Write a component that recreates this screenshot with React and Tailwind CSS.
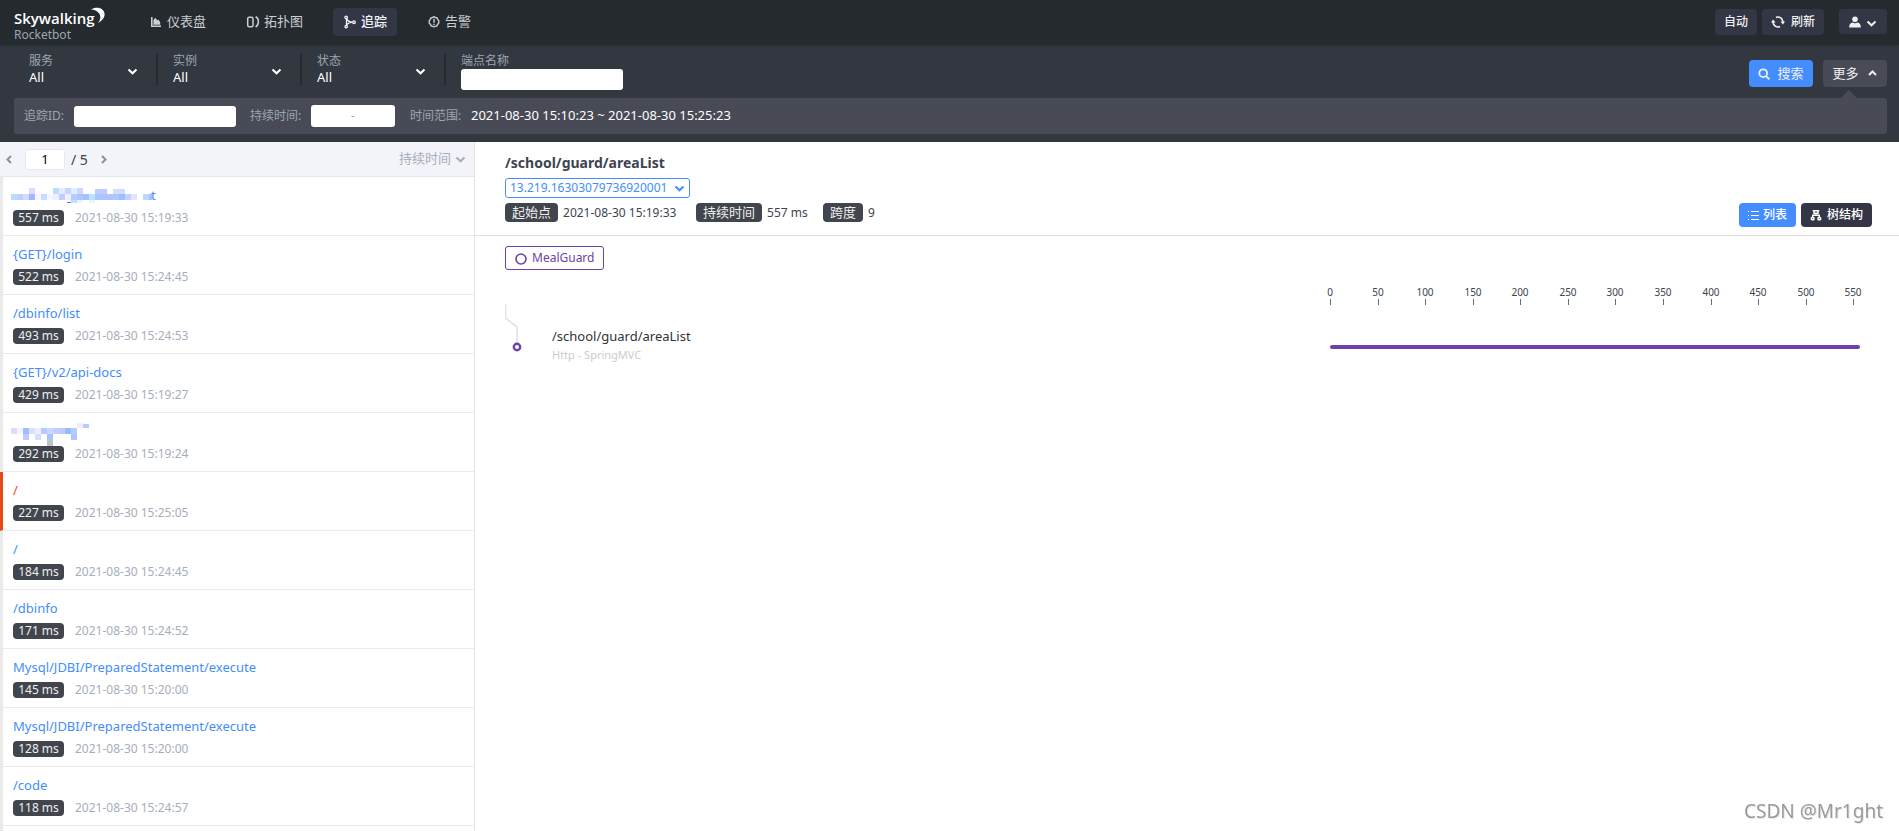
import React from "react";

const traces = [
  { mosaic: "first", ms: 557, time: "2021-08-30 15:19:33" },
  { name: "{GET}/login", ms: 522, time: "2021-08-30 15:24:45" },
  { name: "/dbinfo/list", ms: 493, time: "2021-08-30 15:24:53" },
  { name: "{GET}/v2/api-docs", ms: 429, time: "2021-08-30 15:19:27" },
  { mosaic: "second", ms: 292, time: "2021-08-30 15:19:24" },
  { name: "/", ms: 227, time: "2021-08-30 15:25:05", error: true },
  { name: "/", ms: 184, time: "2021-08-30 15:24:45" },
  { name: "/dbinfo", ms: 171, time: "2021-08-30 15:24:52" },
  { name: "Mysql/JDBI/PreparedStatement/execute", ms: 145, time: "2021-08-30 15:20:00" },
  { name: "Mysql/JDBI/PreparedStatement/execute", ms: 128, time: "2021-08-30 15:20:00" },
  { name: "/code", ms: 118, time: "2021-08-30 15:24:57" },
];

const FONT = "font-['Noto_Sans','Noto_Sans_CJK_SC',sans-serif]";

// Censored names: [x, y, width, height, colour] blocks.
const firstBlocks = [
  [0, 8, 6, 6, "#bcdcff"], [6, 8, 6, 6, "#c3ccff"], [12, 8, 6, 6, "#d3dcff"], [18, 2, 6, 6, "#dedcfb"], [18, 8, 6, 6, "#a3b6ff"],
  [24, 8, 6, 6, "#fdf3ff"], [30, 8, 6, 6, "#c5deff"], [36, 8, 6, 6, "#f6f8ff"], [42, 2, 6, 6, "#b9dfff"], [42, 8, 6, 6, "#edf0ff"],
  [48, 2, 6, 6, "#e3ebff"], [48, 8, 6, 6, "#c3ccff"], [54, 2, 6, 6, "#c3d6ff"], [54, 8, 6, 6, "#f6eafd"], [60, 2, 6, 6, "#e2edff"],
  [60, 8, 6, 6, "#b4ccff"], [60, 14, 6, 3, "#bfe0ff"], [66, 2, 6, 6, "#cdd8ff"], [66, 8, 6, 6, "#b3c3ff"], [66, 14, 6, 3, "#edf3ff"],
  [72, 8, 6, 6, "#a1c3ff"], [78, 8, 6, 6, "#bde4ff"], [78, 14, 6, 3, "#e9f4ff"], [84, 3, 12, 5, "#c0ccff"], [84, 8, 6, 6, "#a9c7ff"],
  [90, 8, 12, 6, "#b4c3ff"], [102, 3, 12, 5, "#d3dcff"], [102, 8, 6, 6, "#a9c9ff"], [108, 8, 6, 6, "#9fbfff"],
  [114, 8, 6, 6, "#c3d3ff"], [120, 8, 6, 6, "#e3e3ff"], [132, 8, 6, 6, "#bcd8ff"],
  [138, 8, 3, 6, "#a9bfff"], [56, 16, 4, 1, "#448dfe"],
];
const secondBlocks = [
  [0, 6, 6, 6, "#dedcfb"], [6, 6, 6, 6, "#f9f3ff"], [12, 6, 6, 6, "#9fc0ff"], [12, 12, 6, 6, "#c0ccff"], [18, 6, 6, 6, "#d3e3ff"],
  [24, 6, 6, 6, "#f3eafd"], [24, 12, 6, 6, "#d3dfff"], [30, 0, 6, 6, "#f3ffff"], [30, 6, 6, 6, "#b3ccff"], [36, 6, 6, 6, "#cfd6ff"],
  [36, 12, 6, 6, "#a4c4ff"], [36, 18, 6, 6, "#c2c3c7"], [42, 6, 6, 6, "#c6ceff"], [48, 6, 6, 6, "#b9ccff"], [54, 6, 6, 6, "#94bcff"],
  [60, 6, 6, 6, "#b4ccff"], [60, 12, 6, 6, "#b3c3ff"], [66, 1, 6, 5, "#f6eafd"], [72, 2, 6, 4, "#b4ccff"],
];

function Mosaic({ kind }) {
  const blocks = kind === "first" ? firstBlocks : secondBlocks;
  return (
    <svg width="150" height="24" viewBox="0 0 150 24" className="-ml-0.5 shrink-0" aria-hidden="true" shapeRendering="crispEdges">
      {blocks.map(([x, y, w, h, c], i) => (
        <rect key={i} x={x} y={y} width={w} height={h} fill={c} />
      ))}
    </svg>
  );
}

function Chevron({ dir = "down", className = "" }) {
  const d = {
    down: "M1.500 3.500 L5.500 7.300 L9.500 3.500",
    up: "M2 7 L5.500 3.500 L9 7",
    left: "M7 2 L3.500 5.500 L7 9",
    right: "M4 2 L7.500 5.500 L4 9",
  }[dir];
  return (
    <svg width="11" height="11" viewBox="0 0 11 11" className={"pointer-events-none shrink-0 " + className} fill="none" stroke="currentColor" strokeWidth="2" aria-hidden="true">
      <path d={d} />
    </svg>
  );
}

const iconBox = "size-3.5 shrink-0";
function ChartIcon() {
  return (
    <svg viewBox="0 0 14 14" className={iconBox} fill="currentColor" aria-hidden="true">
      <path d="M2 2h1.600v8.600H12V12H2z" />
      <path d="M4.400 9.800V5l2-2.200 1.800 2.400 1.400-.4 1.600 2.400v2.600z" />
    </svg>
  );
}
function TopologyIcon() {
  return (
    <svg viewBox="0 0 14 14" className={iconBox} fill="none" stroke="currentColor" strokeWidth="1.500" aria-hidden="true">
      <rect x="1.700" y="2.200" width="5.300" height="9.600" rx="1.500" />
      <path d="M9.600 1.700c2 .8 2.800 2.300 2.800 4.800s-.9 4.500-2.800 5.500" />
    </svg>
  );
}
function TraceIcon() {
  return (
    <svg viewBox="0 0 14 14" className={iconBox} fill="none" stroke="currentColor" strokeWidth="1.300" aria-hidden="true">
      <path d="M3.500 3.200v7.500M3.500 10c1-1.500 3-2.700 6-2.900M3.500 3.500c1 2.300 3 3.500 6 3.600" />
      <circle cx="3.200" cy="2.400" r="1.200" />
      <circle cx="3.200" cy="11.600" r="1.200" />
      <circle cx="11" cy="7.200" r="1.300" />
    </svg>
  );
}
function AlarmIcon() {
  return (
    <svg viewBox="0 0 14 14" className={iconBox} fill="none" stroke="currentColor" strokeWidth="1.400" aria-hidden="true">
      <path d="M7 1.600l1.300.9 1.700.3.700 1.600 1.100 1.300-.1 2.500-1.200 1.300-.8 1.500-1.700.3-1 .7-1-.7-1.700-.3-.8-1.500-1.200-1.300-.1-2.500 1.100-1.300.7-1.600 1.700-.3z" />
      <path d="M7 4v3.800M7 8.700v1.300" />
    </svg>
  );
}

const nav = [
  { label: "仪表盘", Icon: ChartIcon },
  { label: "拓扑图", Icon: TopologyIcon },
  { label: "追踪", Icon: TraceIcon, active: true },
  { label: "告警", Icon: AlarmIcon },
];

function Header() {
  return (
    <header className="relative z-10 flex h-[45px] shrink-0 items-center bg-[#252a2f] pr-3 pb-0.5 pl-3.5 shadow-[0_1px_2px_rgba(0,0,0,0.2)]">
      <a href="#home" className="relative flex w-[125px] shrink-0 flex-col self-start pt-2 text-white">
        <span className="font-['Open_Sans',sans-serif] text-[15px] leading-5 font-semibold">Skywalking</span>
        <span className="text-[12px] leading-[14px] text-[#9da5b2]">Rocketbot</span>
        <svg viewBox="0 0 16 18" className="absolute top-[7px] left-[77px] h-[18px] w-4" fill="currentColor" aria-hidden="true">
          <path d="M0 2.500C3.500.3 8.500 0 11.500 2.800c4 3.700 2.300 10-4.500 13.200C9.800 12.500 10 9 8 6.200 6.200 3.800 3 2.400 0 2.500z" />
        </svg>
      </a>
      <nav className="flex gap-5">
        {nav.map(({ label, Icon, active }) => (
          <a
            key={label}
            href={"#" + label}
            className={
              "flex h-7 items-center gap-1 rounded px-2.5 text-[13px] " +
              (active ? "bg-[#333645] font-medium text-[#f2f4f8]" : "text-[#cbcdd0]")
            }
          >
            <Icon />
            {label}
          </a>
        ))}
      </nav>
      <div className="ml-auto flex items-center text-[12px] text-[#efefef]">
        <button type="button" className="h-[26px] rounded bg-[#333645] px-[9px] font-medium">自动</button>
        <button type="button" className="ml-[5px] flex h-[26px] items-center gap-1.5 rounded bg-[#333645] px-[9px] font-medium">
          <svg viewBox="0 0 14 14" className="size-3.5" fill="none" stroke="currentColor" strokeWidth="1.700" aria-hidden="true">
            <path d="M5 2.400A5 5 0 0 1 11.900 7.200M9 11.600A5 5 0 0 1 2.100 6.800" />
            <path d="M12 9.400 9.400 6.600h4.600zM2 4.600 4.600 7.400H0z" fill="currentColor" stroke="none" />
          </svg>
          刷新
        </button>
        <button type="button" aria-label="User" className="ml-[15px] flex h-[25px] items-center gap-[5px] rounded bg-[#333645] px-2.5">
          <svg viewBox="0 0 12 12" className="size-3" fill="currentColor" aria-hidden="true">
            <circle cx="6" cy="3.200" r="2.800" />
            <path d="M.2 11.500C0 8.500 1.500 6.800 3.500 6.600c1.500.8 3.500.8 5 0 2 .2 3.500 1.900 3.300 4.900z" />
          </svg>
          <Chevron className="mt-1" />
        </button>
      </div>
    </header>
  );
}

const whiteInput = "rounded-[3px] bg-white px-2 text-[12px] text-[#333] outline-none";

function Filters() {
  return (
    <section className="flex shrink-0 flex-col bg-[#333840] px-3 pb-2">
      <div className="flex h-[53px] pl-0.5">
        {["服务", "实例", "状态"].map((label) => (
          <div key={label} className="mt-2 flex h-8 w-36 items-center border-r-2 border-[#252a2f] pl-[15px]">
            <label className="relative flex flex-1 flex-col text-[12px] leading-4 text-[#9da5b2]">
              {label}
              <select className="h-4 appearance-none text-[13px] leading-4 text-white outline-none">
                <option>All</option>
              </select>
              <Chevron className="absolute right-[18px] bottom-2 text-white" />
            </label>
          </div>
        ))}
        <label className="mt-2 ml-[15px] flex w-[162px] flex-col text-[12px] leading-4 text-[#9da5b2]">
          端点名称
          <input type="text" className={"h-[21px] w-full " + whiteInput} />
        </label>
        <div className="mt-[15px] ml-auto flex h-[27px] gap-2.5 text-[13px] text-[#efefef]">
          <button type="button" className="flex w-16 items-center justify-center gap-[7px] rounded bg-[#448dfe]">
            <svg viewBox="0 0 12 12" className="size-3" fill="none" stroke="currentColor" strokeWidth="1.800" aria-hidden="true">
              <circle cx="5.200" cy="5.200" r="3.900" />
              <path d="M8 8l3.300 3.300" />
            </svg>
            搜索
          </button>
          <button type="button" className="flex w-16 items-center justify-center gap-2 rounded bg-[#484b55]">
            更多
            <Chevron dir="up" />
          </button>
        </div>
      </div>
      <div className="relative ml-0.5 flex h-9 items-center rounded-[3px] bg-[#484b55] pl-2.5 text-[12px] whitespace-nowrap text-[#9da5b2]">
        <svg viewBox="0 0 16 8" className="absolute -top-2 right-[30px] h-2 w-4" fill="#484b55" aria-hidden="true">
          <path d="M8 0l8 8H0z" />
        </svg>
        <label className="flex items-center gap-2.5">
          <span className="w-10">追踪ID:</span>
          <input type="text" className={"h-[21px] w-[162px] " + whiteInput} />
        </label>
        <span className="ml-3.5 w-[51px]">持续时间:</span>
        <div className="ml-2.5 flex h-[22px] w-[84px] items-center rounded-[3px] bg-white">
          <input type="text" aria-label="最小持续时间" className="w-0 flex-1 px-1 text-[#333] outline-none" />
          <span>-</span>
          <input type="text" aria-label="最大持续时间" className="w-0 flex-1 px-1 text-[#333] outline-none" />
        </div>
        <span className="ml-[15px] w-[51px]">时间范围:</span>
        <span className="ml-2.5 text-[13px] text-white">2021-08-30 15:10:23 ~ 2021-08-30 15:25:23</span>
      </div>
    </section>
  );
}

function TraceList() {
  return (
    <aside className="flex w-[475px] shrink-0 flex-col overflow-hidden border-r border-[#e5e6e8]">
      <div className="flex h-[35px] shrink-0 items-center border-b border-[#e5e6e8] bg-[#f2f4f9] pr-2 pl-1 text-[#3d444f]">
        <button type="button" aria-label="Previous page" className="text-[#8b8f98]"><Chevron dir="left" /></button>
        <input type="text" aria-label="Page" defaultValue="1" className="ml-2.5 h-[21px] w-10 rounded-[3px] border border-[#e8e9ee] bg-white text-center text-[13px] text-black outline-none" />
        <span className="ml-1 px-0.5 text-[14px]">/ 5</span>
        <button type="button" aria-label="Next page" className="ml-2 text-[#8b8f98]"><Chevron dir="right" /></button>
        <div className="relative ml-auto flex items-center text-[13px] text-[#a7aebb]">
          <select aria-label="排序" className="appearance-none pr-3.5 outline-none">
            <option>持续时间</option>
          </select>
          <Chevron className="absolute right-0" />
        </div>
      </div>
      <ul className="shrink-0">
        {traces.map((t, i) => (
          <li
            key={i}
            className={
              "flex h-[59px] flex-col border-b border-l-3 border-b-[#ebebeb] pt-[9px] pl-2.5 " +
              (t.error ? "border-l-[#e54c17]" : "border-l-[#eaeaea]")
            }
          >
            <a href="#trace" className={"flex h-[18px] text-[13px] leading-[18px] " + (t.error ? "text-[#e54c17]" : "text-[#448dfe]")}>
              {t.mosaic ? <Mosaic kind={t.mosaic} /> : t.name}
              {t.mosaic === "first" && <span className="-ml-2.5">t</span>}
            </a>
            <div className="mt-1.5 flex h-4 items-center gap-[11px] text-[12px]">
              <span className="flex h-4 w-[51px] items-center justify-center rounded bg-[#40454e] text-[#efefef]">{t.ms} ms</span>
              <span className="text-[#a7aebb]">{t.time}</span>
            </div>
          </li>
        ))}
      </ul>
      <div className="flex-1 border-l-3 border-[#eaeaea]" />
    </aside>
  );
}

const badge = "flex h-[19px] items-center rounded bg-[#40454e] px-[7px] text-[13px] text-[#efefef]";

function DetailHeader() {
  return (
    <div className="flex items-end border-b border-[#e0e0e0] pt-[11px] pr-[27px] pb-2 pl-[30px]">
      <div className="flex flex-1 flex-col items-start pb-[5px]">
        <h1 className="text-[14px] leading-5 font-bold text-[#3d444f]">/school/guard/areaList</h1>
        <div className="relative mt-[5px] flex h-5 w-[185px] items-center rounded-[3px] border border-[#448dfe] text-[#448dfe]">
          <select aria-label="Trace ID" className="w-full appearance-none pl-1 text-[12px] outline-none">
            <option>13.219.16303079736920001</option>
          </select>
          <Chevron className="absolute right-1" />
        </div>
        <div className="mt-[5px] flex h-[19px] items-center text-[12px] text-[#3d444f]">
          <span className={badge}>起始点</span>
          <span className="ml-[5px] w-[118px] whitespace-nowrap">2021-08-30 15:19:33</span>
          <span className={"ml-[15px] " + badge}>持续时间</span>
          <span className="ml-[5px] w-[41px] whitespace-nowrap">557 ms</span>
          <span className={"ml-[15px] " + badge}>跨度</span>
          <span className="ml-[5px]">9</span>
        </div>
      </div>
      <div className="flex gap-[5px] text-[12px] font-medium text-white">
        <button type="button" className="flex h-6 items-center gap-1 rounded bg-[#448dfe] px-[9px]">
          <svg viewBox="0 0 11 11" className="size-[11px]" fill="currentColor" aria-hidden="true" shapeRendering="crispEdges">
            <path d="M0 1h1v1H0zM3 1h8v1H3zM0 5h1v1H0zM3 5h8v1H3zM0 9h1v1H0zM3 9h8v1H3z" />
          </svg>
          列表
        </button>
        <button type="button" className="flex h-6 items-center gap-[5px] rounded bg-[#333645] px-[9px]">
          <svg viewBox="0 0 12 12" className="size-3" fill="none" stroke="currentColor" strokeWidth="1.400" aria-hidden="true">
            <path d="M2.700 1.700h6.600M4 1.700v2.600h4V1.700M6 4.300v2M2.700 8.500V6.300h6.600v2.200" />
            <rect x="1.400" y="8.500" width="2.600" height="2.300" rx=".6" />
            <rect x="8" y="8.500" width="2.600" height="2.300" rx=".6" />
          </svg>
          树结构
        </button>
      </div>
    </div>
  );
}

const ticks = [0, 50, 100, 150, 200, 250, 300, 350, 400, 450, 500, 550];
const TOTAL = 557;
const CHART_WIDTH = 530;

function Timeline() {
  return (
    <svg width="550" height="72" viewBox="-10 0 550 72" className="shrink-0" role="img" aria-label="Timeline">
      {ticks.map((v) => {
        const x = Math.round((v / TOTAL) * CHART_WIDTH);
        return (
          <g key={v}>
            <text x={x} y="13" textAnchor="middle" className="fill-[#3d444f] text-[10px]">{v}</text>
            <rect x={x} y="16" width="1" height="6" fill="#6a6f78" />
          </g>
        );
      })}
      <rect x="0" y="62" width={CHART_WIDTH} height="4" rx="2" fill="#6c41ab" />
    </svg>
  );
}

function Detail() {
  return (
    <main className="flex min-w-0 flex-1 flex-col">
      <DetailHeader />
      <div className="flex flex-col pt-2.5 pr-[29px] pl-[30px]">
        <div className="flex h-6 w-[99px] items-center gap-[5px] rounded-[3px] border border-[#6c41ab] pl-[9px] text-[12px] text-[#6c41ab]">
          <svg viewBox="0 0 12 12" className="mt-0.5 size-3" fill="none" stroke="currentColor" strokeWidth="1.600" aria-hidden="true">
            <circle cx="6" cy="6" r="5" />
          </svg>
          MealGuard
        </div>
        <div className="mt-[13px] flex">
          <svg width="47" height="72" viewBox="0 0 47 72" className="shrink-0" fill="none" aria-hidden="true">
            <path d="M.5 21v14L12 44v16" stroke="#e3e3e3" strokeWidth="1.700" />
            <circle cx="12" cy="64" r="3.200" stroke="#6c41ab" strokeWidth="2.400" fill="#fff" />
          </svg>
          <div className="flex flex-1 flex-col pt-[43px]">
            <span className="text-[13px] leading-5 text-[#333]">/school/guard/areaList</span>
            <span className="text-[11px] leading-[18px] text-[#ccc]">Http - SpringMVC</span>
          </div>
          <Timeline />
        </div>
      </div>
    </main>
  );
}

export default function App() {
  return (
    <div className={"flex h-screen flex-col overflow-hidden bg-white " + FONT}>
      <Header />
      <Filters />
      <div className="flex min-h-0 flex-1">
        <TraceList />
        <Detail />
      </div>
      <p className="pointer-events-none fixed right-4 bottom-2 text-[19px] leading-6 text-[#9a9a9a] [text-shadow:1px_1px_0_#e8e8e8]">
        CSDN @Mr1ght
      </p>
    </div>
  );
}
